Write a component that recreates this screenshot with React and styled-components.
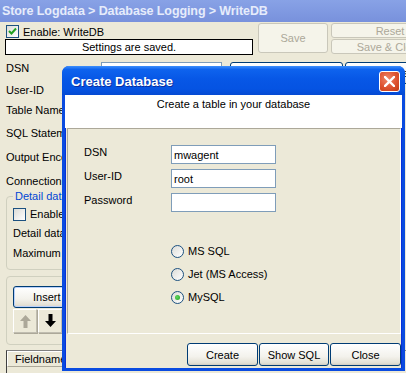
import React from "react";
import styled, { createGlobalStyle } from "styled-components";

const GlobalStyle = createGlobalStyle`
  html, body {
    margin: 0;
    padding: 0;
    background: #ece9d8;
    overflow: hidden;
  }
  body {
    font-family: "Liberation Sans", Tahoma, sans-serif;
    font-size: 11px;
    color: #000;
  }
  #root {
    width: 406px;
    height: 373px;
    overflow: hidden;
  }
`;

const Page = styled.div`
  position: relative;
  width: 406px;
  height: 373px;
  overflow: hidden;
  background: #ece9d8;
`;

const PathBar = styled.div`
  height: 22px;
  padding-left: 2px;
  display: flex;
  align-items: center;
  background: linear-gradient(#88a2e6, #7891dc);
  color: #e6ecfb;
  font-weight: bold;
  font-size: 12.5px;
  letter-spacing: -0.1px;
  white-space: nowrap;
`;

const TopRow = styled.div`
  display: flex;
  padding: 1px 0 0 5px;
  height: 31px;
`;

const EnableCol = styled.div`
  width: 248px;
  flex: none;
  padding-top: 2px;
  display: flex;
  flex-direction: column;
`;

const CheckRow = styled.label`
  display: flex;
  align-items: center;
  gap: 4px;
  height: ${(p) => p.$h || 14}px;
  margin-left: ${(p) => p.$indent ?? 1}px;
  margin-top: ${(p) => p.$top || 0}px;
  white-space: nowrap;
`;

const Box = styled.span`
  width: 11px;
  height: 11px;
  border: 1px solid #1c5180;
  background: linear-gradient(135deg, #dcdcd7, #fff);
  display: flex;
  align-items: center;
  justify-content: center;
  flex: none;
`;

const StatusBox = styled.div`
  margin-top: 1px;
  height: 14px;
  border: 1px solid #000;
  background: #fff;
  text-align: center;
  line-height: 14px;
`;

const XpButton = styled.div`
  box-sizing: border-box;
  width: ${(p) => p.$w}px;
  height: ${(p) => p.$h}px;
  flex: none;
  display: flex;
  align-items: center;
  justify-content: center;
  border-radius: 3px;
  white-space: nowrap;
  border: 1px solid ${(p) => (p.$disabled ? "#c9c7ba" : "#003c74")};
  color: ${(p) => (p.$disabled ? "#aca899" : "#000")};
  background: ${(p) =>
    p.$disabled
      ? "#f5f4ea"
      : "linear-gradient(#ffffff, #f3f2ec 60%, #e3e0d5 90%, #d6d0c5)"};
  box-shadow: ${(p) =>
    p.$disabled ? "none" : "inset 0 -1px 0 #d6d0c5"};
`;

const SaveArea = styled.div`
  margin-left: 5px;
  flex: none;
`;

const SideButtons = styled.div`
  margin-left: 3px;
  flex: none;
  display: flex;
  flex-direction: column;
  gap: 1px;
`;

const Form = styled.div`
  margin-top: 6px;
  display: flex;
  flex-direction: column;
`;

const FieldRow = styled.div`
  display: flex;
  height: ${(p) => p.$h}px;
  padding-left: 6px;
`;

const Label = styled.div`
  width: 95px;
  padding-top: 1px;
  line-height: 14px;
  white-space: nowrap;
  flex: none;
`;

const Field = styled.div`
  box-sizing: border-box;
  width: ${(p) => p.$w}px;
  height: 20px;
  margin-top: 2px;
  border: 1px solid #7f9db9;
  background: #fff;
  flex: none;
`;

const RowButtons = styled.div`
  display: flex;
  gap: 2px;
  margin-left: 8px;
  margin-top: 2px;
`;

const Group = styled.fieldset`
  margin: ${(p) => p.$top || 0}px 0 0 6px;
  width: 380px;
  min-width: 0;
  box-sizing: border-box;
  height: ${(p) => p.$h}px;
  border: 1px solid #d0d0bf;
  border-radius: 4px;
  padding: 0 0 0 6px;
  display: flex;
  flex-direction: column;
`;

const Legend = styled.legend`
  color: #0046d5;
  padding: 0 2px;
  line-height: 14px;
`;

const GroupText = styled.div`
  line-height: 14px;
  margin-top: ${(p) => p.$top}px;
  white-space: nowrap;
`;

const InsertButton = styled(XpButton)`
  margin-top: 9px;
  justify-content: flex-start;
  padding-left: 19px;
  border-color: #003c74;
  box-shadow: inset 0 0 0 1px #b9d1fa;
`;

const ArrowRow = styled.div`
  display: flex;
  gap: 1px;
  margin-top: 1px;
`;

const ArrowButton = styled.div`
  box-sizing: border-box;
  width: 24px;
  height: 24px;
  display: flex;
  align-items: center;
  justify-content: center;
  background: #ece9d8;
  border: 1px solid #c0bdb0;
  border-top-color: #fff;
  border-left-color: #fff;
  box-shadow: 1px 1px 0 #aca899;
`;

const Table = styled.div`
  margin: 5px 0 0 6px;
  border-left: 1px solid #404040;
  border-top: 1px solid #808080;
  height: 40px;
`;

const HeaderCell = styled.div`
  box-sizing: border-box;
  width: 90px;
  height: 16px;
  padding-left: 7px;
  line-height: 15px;
  background: #ece9d8;
  border-top: 1px solid #fff;
  border-left: 1px solid #fff;
  border-bottom: 1px solid #aca899;
`;

/* dialog */

const Dialog = styled.div`
  position: absolute;
  left: 62px;
  top: 66px;
  width: 343px;
  height: 305px;
  box-sizing: border-box;
  border: 3px solid #0a4be0;
  border-top: none;
  border-radius: 7px 7px 0 0;
  background: #ece9d8;
  display: flex;
  flex-direction: column;
  box-shadow: inset 1px 0 0 #0831d9, inset -1px 0 0 #0831d9;
`;

const TitleBar = styled.div`
  height: 29px;
  margin: 0 -3px;
  padding: 2px 5px 0 9px;
  box-sizing: border-box;
  border-radius: 7px 7px 0 0;
  display: flex;
  align-items: center;
  justify-content: space-between;
  background: linear-gradient(
    #3d8ffc 0%,
    #0e63ee 12%,
    #0757e6 45%,
    #0553e2 80%,
    #0549d2 100%
  );
  color: #fff;
  font-weight: bold;
  font-size: 13px;
  text-shadow: 1px 1px 0 #0a2e9e;
`;

const CloseButton = styled.div`
  width: 19px;
  height: 19px;
  border: 1px solid #fff;
  border-radius: 3px;
  background: radial-gradient(circle at 40% 35%, #f0886a, #dd5230 55%, #c23a12);
  display: flex;
  align-items: center;
  justify-content: center;
`;

const Header = styled.div`
  height: 33px;
  background: #fff;
  text-align: center;
  padding-top: 2px;
  box-sizing: border-box;
  line-height: 14px;
`;

const Panel = styled.div`
  margin: 0 1px 0 2px;
  height: 206px;
  box-sizing: border-box;
  border-top: 1px solid #aca899;
  border-left: 1px solid #aca899;
  border-bottom: 1px solid #fff;
  border-right: 1px solid #fff;
  padding: 16px 0 0 16px;
  display: flex;
  flex-direction: column;
`;

const DialogRow = styled.div`
  display: flex;
  height: 18px;
  margin-bottom: 6px;
`;

const DialogLabel = styled.div`
  width: 87px;
  line-height: 14px;
  flex: none;
`;

const DialogField = styled.div`
  box-sizing: border-box;
  width: 105px;
  height: 19px;
  border: 1px solid #7f9db9;
  background: #fff;
  padding: 2px 0 0 2px;
  line-height: 14px;
`;

const Radios = styled.div`
  margin: 27px 0 0 87px;
  display: flex;
  flex-direction: column;
  gap: 9px;
`;

const RadioRow = styled.div`
  display: flex;
  align-items: center;
  gap: 4px;
  height: 14px;
`;

const RadioCircle = styled.span`
  width: 11px;
  height: 11px;
  border: 1px solid #1c5180;
  border-radius: 50%;
  background: linear-gradient(135deg, #dcdcd7, #fff);
  display: flex;
  align-items: center;
  justify-content: center;
  flex: none;
  &::after {
    content: "";
    display: ${(p) => (p.$checked ? "block" : "none")};
    width: 5px;
    height: 5px;
    border-radius: 50%;
    background: radial-gradient(circle at 40% 40%, #5fd65f, #21a121);
  }
`;

const ButtonBar = styled.div`
  display: flex;
  justify-content: flex-end;
  gap: 1px;
  padding: 9px 1px 0 0;
`;

function Check({ checked }) {
  return (
    <Box>
      {checked && (
        <svg width="9" height="9" viewBox="0 0 9 9">
          <path d="M1 4 L3.5 6.5 L8 1.5" fill="none" stroke="#21a121" strokeWidth="2" />
        </svg>
      )}
    </Box>
  );
}

function Arrow({ up, color }) {
  return (
    <svg width="11" height="14" viewBox="0 0 11 14" style={{ transform: up ? "rotate(180deg)" : "none" }}>
      <path d="M3.5 0 H7.5 V7 H11 L5.5 13 L0 7 H3.5 Z" fill={color} />
    </svg>
  );
}

export default function App() {
  return (
    <Page>
      <GlobalStyle />
      <PathBar>Store Logdata &gt; Database Logging &gt; WriteDB</PathBar>

      <TopRow>
        <EnableCol>
          <CheckRow>
            <Check checked />
            Enable: WriteDB
          </CheckRow>
          <StatusBox>Settings are saved.</StatusBox>
        </EnableCol>
        <SaveArea>
          <XpButton $w={70} $h={30} $disabled>Save</XpButton>
        </SaveArea>
        <SideButtons>
          <XpButton $w={118} $h={15} $disabled>Reset</XpButton>
          <XpButton $w={118} $h={15} $disabled>Save &amp; Close</XpButton>
        </SideButtons>
      </TopRow>

      <Form>
        <FieldRow $h={22}>
          <Label>DSN</Label>
          <Field $w={121} />
          <RowButtons>
            <XpButton $w={113} $h={22}>Create Database</XpButton>
            <XpButton $w={113} $h={22}>Test</XpButton>
          </RowButtons>
        </FieldRow>
        <FieldRow $h={20}>
          <Label>User-ID</Label>
        </FieldRow>
        <FieldRow $h={23}>
          <Label>Table Name</Label>
        </FieldRow>
        <FieldRow $h={24}>
          <Label>SQL Statement</Label>
        </FieldRow>
        <FieldRow $h={24}>
          <Label>Output Encoding</Label>
        </FieldRow>
        <FieldRow $h={16}>
          <Label>Connection</Label>
        </FieldRow>
      </Form>

      <Group $h={81}>
        <Legend>Detail data</Legend>
        <CheckRow $indent={0} $top={4}>
          <Check />
          Enable
        </CheckRow>
        <GroupText $top={5}>Detail data</GroupText>
        <GroupText $top={6}>Maximum number</GroupText>
      </Group>

      <Group $top={6} $h={69}>
        <InsertButton $w={70} $h={22}>Insert</InsertButton>
        <ArrowRow>
          <ArrowButton>
            <Arrow up color="#aca899" />
          </ArrowButton>
          <ArrowButton>
            <Arrow color="#000" />
          </ArrowButton>
        </ArrowRow>
      </Group>

      <Table>
        <HeaderCell>Fieldname</HeaderCell>
      </Table>

      <Dialog>
        <TitleBar>
          <span>Create Database</span>
          <CloseButton>
            <svg width="11" height="11" viewBox="0 0 11 11">
              <path d="M1 1 L10 10 M10 1 L1 10" stroke="#fff" strokeWidth="2.4" strokeLinecap="square" />
            </svg>
          </CloseButton>
        </TitleBar>
        <Header>Create a table in your database</Header>
        <Panel>
          <DialogRow>
            <DialogLabel>DSN</DialogLabel>
            <DialogField>mwagent</DialogField>
          </DialogRow>
          <DialogRow>
            <DialogLabel>User-ID</DialogLabel>
            <DialogField>root</DialogField>
          </DialogRow>
          <DialogRow>
            <DialogLabel>Password</DialogLabel>
            <DialogField />
          </DialogRow>
          <Radios>
            <RadioRow>
              <RadioCircle />
              MS SQL
            </RadioRow>
            <RadioRow>
              <RadioCircle />
              Jet (MS Access)
            </RadioRow>
            <RadioRow>
              <RadioCircle $checked />
              MySQL
            </RadioRow>
          </Radios>
        </Panel>
        <ButtonBar>
          <XpButton $w={71} $h={23}>Create</XpButton>
          <XpButton $w={70} $h={23}>Show SQL</XpButton>
          <XpButton $w={71} $h={23}>Close</XpButton>
        </ButtonBar>
      </Dialog>
    </Page>
  );
}
